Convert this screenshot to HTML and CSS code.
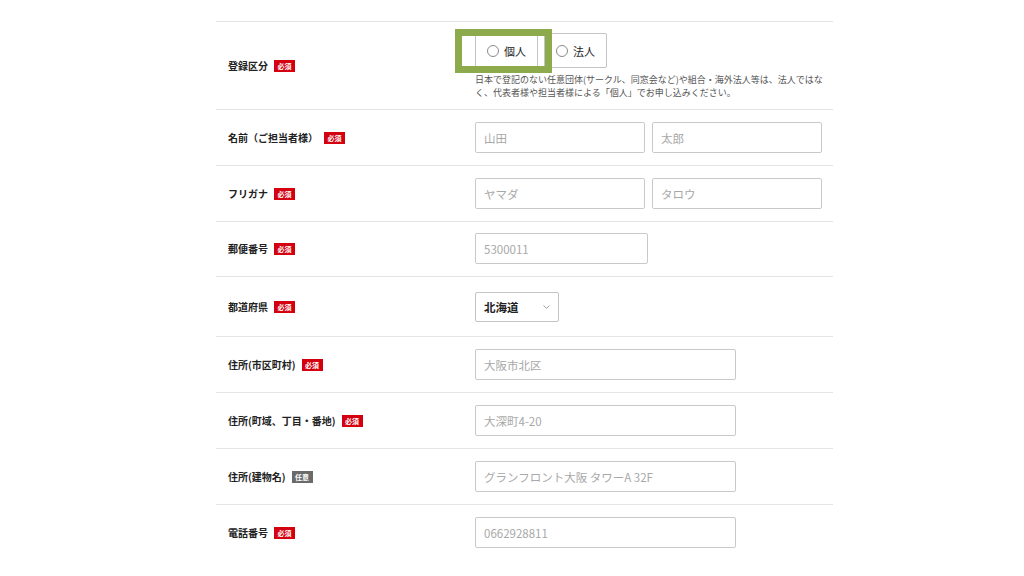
FILE: index.html
```html
<!DOCTYPE html>
<html lang="ja">
<head>
<meta charset="utf-8">
<title>お申し込みフォーム</title>
<link rel="stylesheet" href="styles.css">
</head>
<body>
<div class="form">
  <div class="row row-type">
    <div class="label">登録区分<span class="badge">必須</span></div>
    <div class="field">
      <div class="radios">
        <label class="radio"><span class="dot"></span>個人</label>
        <label class="radio"><span class="dot"></span>法人</label>
        <span class="highlight"></span>
      </div>
      <p class="note">日本で登記のない任意団体(サークル、同窓会など)や組合・海外法人等は、法人ではなく、代表者様や担当者様による「個人」でお申し込みください。</p>
    </div>
  </div>
  <div class="row">
    <div class="label">名前（ご担当者様）<span class="badge">必須</span></div>
    <div class="field pair">
      <input class="input w-half" placeholder="山田">
      <input class="input w-half" placeholder="太郎">
    </div>
  </div>
  <div class="row">
    <div class="label">フリガナ<span class="badge">必須</span></div>
    <div class="field pair">
      <input class="input w-half" placeholder="ヤマダ">
      <input class="input w-half" placeholder="タロウ">
    </div>
  </div>
  <div class="row row-zip">
    <div class="label">郵便番号<span class="badge">必須</span></div>
    <div class="field">
      <input class="input w-zip" placeholder="5300011">
    </div>
  </div>
  <div class="row row-select">
    <div class="label">都道府県<span class="badge">必須</span></div>
    <div class="field">
      <div class="select">北海道
        <svg class="chev" width="7" height="4" viewBox="0 0 7 4"><path d="M0.5 0.5 L3.5 3.3 L6.5 0.5" fill="none" stroke="#9a9a9a" stroke-width="0.9"/></svg>
      </div>
    </div>
  </div>
  <div class="row">
    <div class="label">住所(市区町村)<span class="badge">必須</span></div>
    <div class="field">
      <input class="input w-addr" placeholder="大阪市北区">
    </div>
  </div>
  <div class="row">
    <div class="label">住所(町域、丁目・番地)<span class="badge">必須</span></div>
    <div class="field">
      <input class="input w-addr" placeholder="大深町4-20">
    </div>
  </div>
  <div class="row">
    <div class="label">住所(建物名)<span class="badge badge-opt">任意</span></div>
    <div class="field">
      <input class="input w-addr" placeholder="グランフロント大阪 タワーA 32F">
    </div>
  </div>
  <div class="row row-last">
    <div class="label">電話番号<span class="badge">必須</span></div>
    <div class="field">
      <input class="input w-addr" placeholder="0662928811">
    </div>
  </div>
</div>
</body>
</html>
```

FILE: styles.css
```css
html, body {
  margin: 0;
  padding: 0;
  background: #ffffff;
}
body {
  font-family: "Noto Sans CJK JP", "Noto Sans", sans-serif;
  color: #222222;
}
.form {
  width: 617px;
  margin: 21px 0 0 216px;
  border-top: 1px solid #e4e4e4;
}
.row {
  display: grid;
  grid-template-columns: 259px 1fr;
  align-items: center;
  padding: 12px 0;
  border-bottom: 1px solid #e4e4e4;
}
.row-type {
  padding: 11px 0 10px;
}
.row-zip {
  padding: 11px 0 12px;
}
.row-select {
  padding: 15px 0 14px;
}
.row-last {
  border-bottom: none;
}
.label {
  display: flex;
  align-items: center;
  padding-left: 12px;
  font-size: 10px;
  font-weight: 700;
  line-height: 14px;
  color: #222222;
}
.badge {
  display: inline-block;
  margin-left: 6px;
  padding: 0 3.5px;
  height: 12px;
  line-height: 12px;
  font-size: 7px;
  font-weight: 700;
  color: #ffffff;
  background: #d5000f;
}
.badge-opt {
  background: #6a6a6a;
}
.field {
  display: flex;
  flex-direction: column;
  align-items: flex-start;
}
.pair {
  flex-direction: row;
  gap: 7px;
}
.radios {
  position: relative;
  display: flex;
  gap: 6px;
}
.radio {
  display: flex;
  align-items: center;
  gap: 5px;
  box-sizing: border-box;
  height: 35px;
  padding: 0 11px 0 11px;
  border: 1px solid #c4c4c4;
  border-radius: 2px;
  font-size: 11px;
  line-height: 14px;
  color: #222222;
}
.dot {
  display: block;
  width: 10px;
  height: 10px;
  border: 1px solid #8a8a8a;
  border-radius: 50%;
}
.highlight {
  position: absolute;
  left: -20px;
  top: -4px;
  width: 97px;
  height: 44px;
  box-sizing: border-box;
  border: 7px solid #8dab4d;
  pointer-events: none;
}
.note {
  margin: 5px 0 0;
  width: 352px;
  font-size: 9px;
  line-height: 13px;
  color: #555555;
}
.input {
  box-sizing: border-box;
  height: 31px;
  margin: 0;
  padding: 0 8px;
  border: 1px solid #c9c9c9;
  border-radius: 2px;
  background: #ffffff;
  font-family: "Noto Sans CJK JP", "Noto Sans", sans-serif;
  font-size: 11.5px;
  color: #222222;
  outline: none;
}
.input::placeholder {
  color: #a8a8a8;
}
.w-half { width: 170px; }
.w-zip { width: 173px; }
.w-addr { width: 261px; }
.select {
  box-sizing: border-box;
  display: flex;
  align-items: center;
  justify-content: space-between;
  width: 84px;
  height: 30px;
  padding: 0 8px 0 8px;
  border: 1px solid #c4c4c4;
  border-radius: 2px;
  font-size: 11.5px;
  font-weight: 700;
  line-height: 14px;
  color: #222222;
}
.chev {
  display: block;
}
```
